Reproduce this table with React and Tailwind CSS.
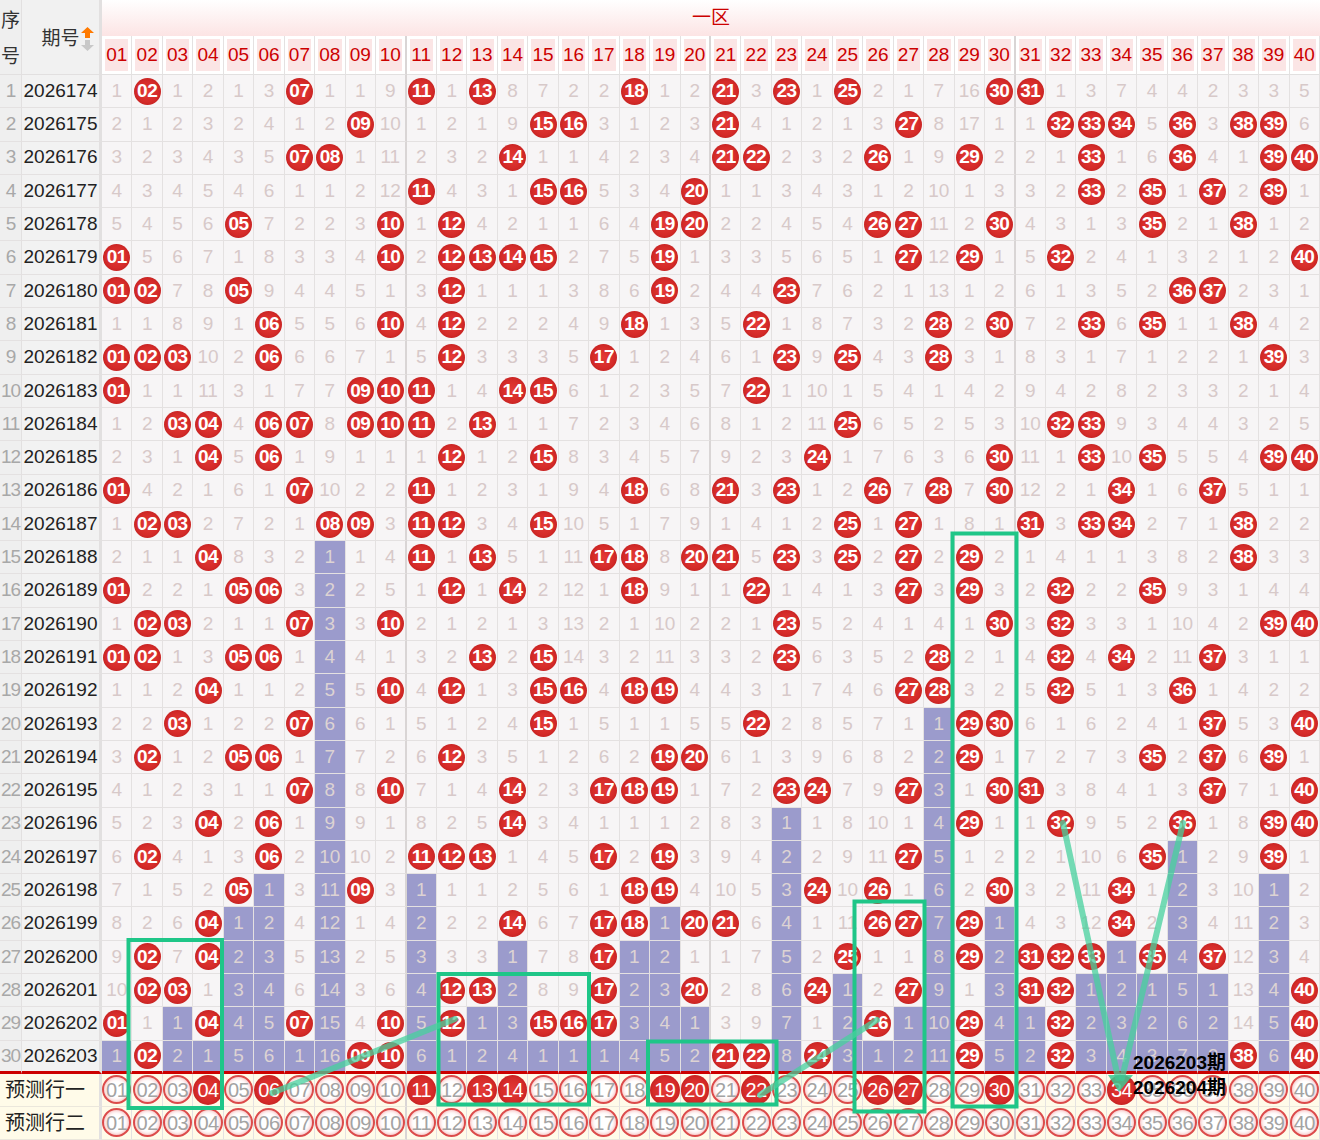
import React from 'react';

// drawn numbers per period (一区 01-40), rows 2026174 .. 2026203
const DRAWS = [
  [2, 7, 11, 13, 18, 21, 23, 25, 30, 31],
  [9, 15, 16, 21, 27, 32, 33, 34, 36, 38, 39],
  [7, 8, 14, 21, 22, 26, 29, 33, 36, 39, 40],
  [11, 15, 16, 20, 33, 35, 37, 39],
  [5, 10, 12, 19, 20, 26, 27, 30, 35, 38],
  [1, 10, 12, 13, 14, 15, 19, 27, 29, 32, 40],
  [1, 2, 5, 12, 19, 23, 36, 37],
  [6, 10, 12, 18, 22, 28, 30, 33, 35, 38],
  [1, 2, 3, 6, 12, 17, 23, 25, 28, 39],
  [1, 9, 10, 11, 14, 15, 22],
  [3, 4, 6, 7, 9, 10, 11, 13, 25, 32, 33],
  [4, 6, 12, 15, 24, 30, 33, 35, 39, 40],
  [1, 7, 11, 18, 21, 23, 26, 28, 30, 34, 37],
  [2, 3, 8, 9, 11, 12, 15, 25, 27, 31, 33, 34, 38],
  [4, 11, 13, 17, 18, 20, 21, 23, 25, 27, 29, 38],
  [1, 5, 6, 12, 14, 18, 22, 27, 29, 32, 35],
  [2, 3, 7, 10, 23, 30, 32, 39, 40],
  [1, 2, 5, 6, 13, 15, 23, 28, 32, 34, 37],
  [4, 10, 12, 15, 16, 18, 19, 27, 28, 32, 36],
  [3, 7, 15, 22, 29, 30, 37, 40],
  [2, 5, 6, 12, 19, 20, 29, 35, 37, 39],
  [7, 10, 14, 17, 18, 19, 23, 24, 27, 30, 31, 37, 40],
  [4, 6, 14, 29, 32, 36, 39, 40],
  [2, 6, 11, 12, 13, 17, 19, 27, 35, 39],
  [5, 9, 18, 19, 24, 26, 30, 34],
  [4, 14, 17, 18, 20, 21, 26, 27, 29, 34],
  [2, 4, 17, 25, 29, 31, 32, 33, 35, 37],
  [2, 3, 12, 13, 17, 20, 24, 27, 31, 32, 40],
  [1, 4, 7, 10, 12, 15, 16, 17, 26, 29, 32, 40],
  [2, 9, 10, 21, 22, 24, 29, 32, 38, 40],
];

// omission shown in the first row for numbers not drawn there
const FIRST_ROW_MISS = {
  1: 1, 3: 1, 4: 2, 5: 1, 6: 3, 8: 1, 9: 1, 10: 9, 12: 1, 14: 8, 15: 7, 16: 2, 17: 2, 19: 1, 20: 2,
  22: 3, 24: 1, 26: 2, 27: 1, 28: 7, 29: 16, 32: 1, 33: 3, 34: 7, 35: 4, 36: 4, 37: 2, 38: 3, 39: 3, 40: 5,
};

const PREDICT_ONE = [4, 6, 11, 13, 14, 19, 20, 22, 26, 27, 30, 34];
const FIRST_ISSUE = 2026174;
const COLS = Array.from({ length: 40 }, (_, i) => i + 1);

const pad = (n) => String(n).padStart(2, '0');

// compute omission values + the trailing "cold" streak of each column
const buildRows = () => {
  const miss = {};
  COLS.forEach((c) => { miss[c] = (FIRST_ROW_MISS[c] ?? 1) - 1; });
  const rows = DRAWS.map((draw) =>
    COLS.map((c) => {
      if (draw.includes(c)) {
        miss[c] = 0;
        return { hit: true };
      }
      miss[c] += 1;
      return { hit: false, value: miss[c] };
    })
  );
  for (let i = 0; i < 40; i++) {
    for (let r = rows.length - 1; r >= 0 && !rows[r][i].hit; r--) rows[r][i].cold = true;
  }
  return rows;
};

const rightBorder = (c) =>
  c % 10 === 0 && c < 40 ? 'border-r-2 border-r-[#d9d5d5]' : 'border-r border-r-[#e4e1e1]';

const Ball = ({ n }) => (
  <span className="flex items-center justify-center w-[27px] h-[27px] rounded-full text-white text-[19px] font-bold tracking-[-0.5px] bg-[radial-gradient(circle,#e33a36_0%,#d52b29_55%,#bd1d1d_86%,rgba(189,29,29,0)_100%)]">
    {pad(n)}
  </span>
);

const PredBall = ({ n, on }) =>
  on ? (
    <span className="flex items-center justify-center w-[30px] h-[30px] rounded-full text-white text-[20px] tracking-[-0.5px] bg-[radial-gradient(circle,#e33a36_0%,#d52b29_55%,#bd1d1d_86%,rgba(189,29,29,0)_100%)]">
      {pad(n)}
    </span>
  ) : (
    <span className="flex items-center justify-center w-[29px] h-[29px] rounded-full bg-white border-2 border-[#dc4b4b] shadow-[inset_0_0_4px_#f2a2a2] text-[20px] text-[#a3a3a3] tracking-[-0.5px]">
      {pad(n)}
    </span>
  );

const SortArrows = () => (
  <svg width="13" height="24" viewBox="0 0 13 24">
    <polygon points="6.5,0 13,6 9,6 9,11 4,11 4,6 0,6" fill="#ff7a00" />
    <polygon points="6.5,24 13,18 9,18 9,13 4,13 4,18 0,18" fill="#c8c8c8" />
  </svg>
);

const Overlay = () => (
  <svg className="absolute inset-0 pointer-events-none" width="1320" height="1140" viewBox="0 0 1320 1140">
    <g fill="none" stroke="#1fc688" strokeWidth="4">
      <rect x="128.5" y="940" width="93.5" height="168" />
      <rect x="438.5" y="974" width="150.5" height="130.5" />
      <rect x="648" y="1041.5" width="128.5" height="63" />
      <rect x="854.5" y="901.5" width="70" height="210" />
      <rect x="952.5" y="533.5" width="64" height="573" />
    </g>
    <g stroke="#47d09d" strokeOpacity="0.75" strokeWidth="6" strokeLinecap="round">
      <line x1="272" y1="1093" x2="455" y2="1019" />
      <line x1="760" y1="1095" x2="877" y2="1020" />
      <line x1="1063" y1="823" x2="1118" y2="1078" />
      <line x1="1183" y1="823" x2="1122" y2="1078" />
    </g>
    <polygon points="1108,1075 1133,1075 1119,1092" fill="#3cc893" fillOpacity="0.85" />
  </svg>
);

const App = () => {
  const rows = buildRows();

  return (
    <div className="relative w-[1320px] h-[1140px] overflow-hidden bg-white font-['Liberation_Sans','Noto_Sans_CJK_SC',sans-serif]">
      <div className="grid w-[1320px] grid-cols-[22px_80px_repeat(40,minmax(0,1fr))] grid-rows-[36px_39px_repeat(30,33.3px)_33px_33px]">
        {/* header */}
        <div className="row-span-2 flex flex-col items-center justify-between pt-[8px] pb-[4px] bg-[#efefef] border-r border-r-[#e2e0e0] border-b border-b-[#e2e0e0] text-[19px] leading-[26px] text-[#333]">
          <span>序</span>
          <span>号</span>
        </div>
        <div className="row-span-2 flex items-center justify-center gap-[1px] pt-[4px] bg-[#f1f1f1] border-r-[3px] border-r-[#e2e0e0] border-b border-b-[#e2e0e0] text-[19px] text-[#333]">
          <span className="pl-[14px]">期号</span>
          <SortArrows />
        </div>
        <div className="col-span-40 flex items-center justify-center bg-[linear-gradient(to_bottom,#ffffff,#fce4e4)] text-[19px] text-[#cc0000]">
          一区
        </div>
        {COLS.map((c) => (
          <div key={`h${c}`} className={`p-[3px] bg-white border-b border-b-[#e2e0e0] ${rightBorder(c)}`}>
            <div className="h-full flex items-center justify-center bg-[#fbe5e5] text-[19px] text-[#cc0000]">{pad(c)}</div>
          </div>
        ))}

        {/* data rows */}
        {rows.map((row, r) => {
          const last = r === rows.length - 1;
          const bottom = last ? 'border-b-[3px] border-b-[#cc0000]' : 'border-b border-b-[#e4e1e1]';
          return (
            <React.Fragment key={r}>
              <div className={`flex items-center justify-center bg-[#efefef] border-r border-r-[#e2e0e0] ${bottom} text-[19px] tracking-[-1px] text-[#a8a8a8]`}>
                {r + 1}
              </div>
              <div className={`flex items-center justify-center bg-[#f2f2f2] border-r-[3px] border-r-[#e2e0e0] ${bottom} text-[19px] text-[#222]`}>
                {FIRST_ISSUE + r}
              </div>
              {row.map((cell, i) => {
                const c = i + 1;
                const bg = cell.cold ? 'bg-[#9b9bcc] text-[#ddd3d3]' : 'bg-[#f7f5f6] text-[#d7c9c9]';
                return (
                  <div key={c} className={`flex items-center justify-center text-[19px] ${bg} ${bottom} ${rightBorder(c)}`}>
                    {cell.hit ? <Ball n={c} /> : cell.value}
                  </div>
                );
              })}
            </React.Fragment>
          );
        })}

        {/* prediction rows */}
        {['预测行一', '预测行二'].map((label, r) => (
          <React.Fragment key={label}>
            <div className="col-span-2 flex items-center pl-[5px] bg-[#fffbe9] border-r-[3px] border-r-[#e2e0e0] border-b border-b-[#ebe7dc] text-[20px] text-[#222]">
              {label}
            </div>
            {COLS.map((c) => (
              <div key={c} className={`flex items-center justify-center bg-[#fffbe9] border-b border-b-[#ebe7dc] ${rightBorder(c)}`}>
                <PredBall n={c} on={r === 0 && PREDICT_ONE.includes(c)} />
              </div>
            ))}
          </React.Fragment>
        ))}
      </div>

      <Overlay />

      <div className="absolute left-[1133px] top-[1052px] text-[19px] leading-[22px] font-bold text-black">2026203期</div>
      <div className="absolute left-[1133px] top-[1077px] text-[19px] leading-[22px] font-bold text-black">2026204期</div>
    </div>
  );
};

export default App;
